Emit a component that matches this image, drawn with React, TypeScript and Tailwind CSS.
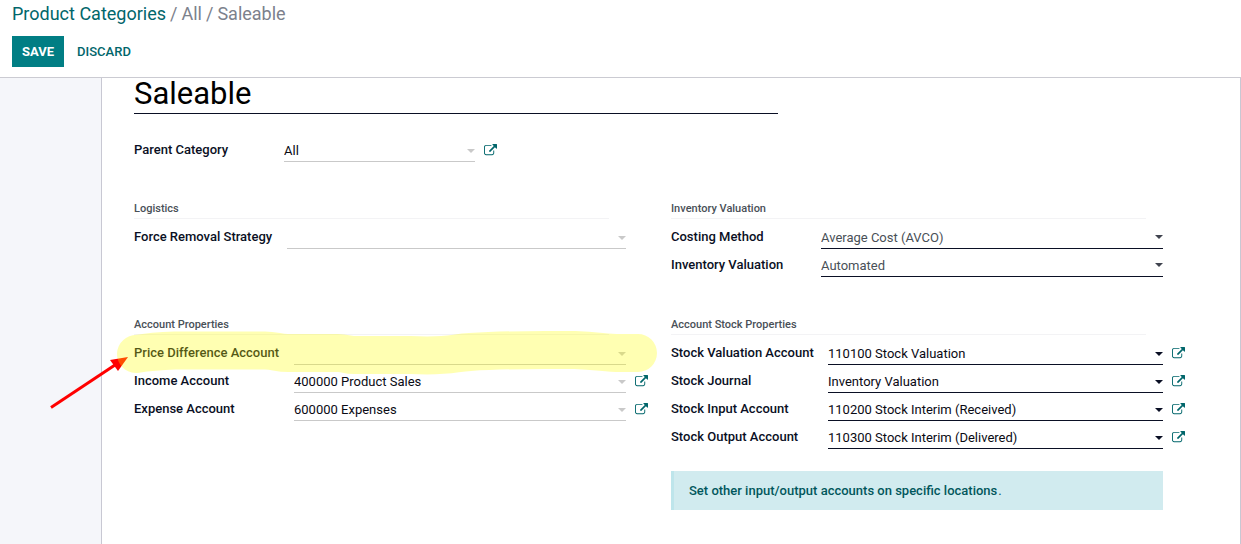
import type { ReactNode } from 'react'

type FieldProps = {
  id: string
  label: string
  value: string
  labelWidth: string
  tone?: 'muted' | 'strong' | 'native'
  link?: boolean
}

const tones = {
  muted: { select: 'border-[#c9c9c9] text-[#0a0a14]', caret: 'top-[15px] text-[#c9c9c9]' },
  strong: { select: 'border-[#0a0f24] text-[#0a0a14]', caret: 'top-[15px] text-[#0a0f24]' },
  native: { select: 'border-[#0a0f24] text-[#495057]', caret: 'top-3.5 text-[#40444f]' },
}

function ExternalLinkIcon() {
  return (
    <svg viewBox="0 0 1792 1792" className="size-[13px]" fill="currentColor" aria-hidden="true">
      <path d="M1408 928v320q0 119-84.5 203.5t-203.5 84.5h-832q-119 0-203.5-84.5t-84.5-203.5v-832q0-119 84.5-203.5t203.5-84.5h704q14 0 23 9t9 23v64q0 14-9 23t-23 9h-704q-66 0-113 47t-47 113v832q0 66 47 113t113 47h832q66 0 113-47t47-113v-320q0-14 9-23t23-9h64q14 0 23 9t9 23zm384-864v512q0 26-19 45t-45 19-45-19l-176-176-652 652q-10 10-23 10t-23-10l-114-114q-10-10-10-23t10-23l652-652-176-176q-19-19-19-45t19-45 45-19h512q26 0 45 19t19 45z" />
    </svg>
  )
}

function Field({ id, label, value, labelWidth, tone = 'muted', link = false }: FieldProps) {
  return (
    <div className="flex h-7">
      <label htmlFor={id} className={`${labelWidth} shrink-0 pt-1.5 text-[13px] leading-5 font-medium text-[#0a0f24]`}>
        {label}
      </label>
      <div className="relative min-w-0 flex-1">
        <select
          id={id}
          defaultValue={value}
          className={`${tones[tone].select} block h-7 w-full appearance-none border-b bg-transparent pt-1.5 pr-4 text-[13px] leading-5 outline-none`}
        >
          <option value={value}>{value}</option>
        </select>
        <svg
          viewBox="0 0 8 4"
          className={`${tones[tone].caret} pointer-events-none absolute right-0 h-1 w-2`}
          fill="currentColor"
          aria-hidden="true"
        >
          <path d="M0 0h8L4 4z" />
        </svg>
      </div>
      <div className="w-[23px] shrink-0 pt-2.5 pl-[9px]">
        {link && (
          <a href="#" className="block text-[#01666b]" aria-label={`Open ${label}`}>
            <ExternalLinkIcon />
          </a>
        )}
      </div>
    </div>
  )
}

function Group({ title, children }: { title: string; children: ReactNode }) {
  return (
    <section className="w-1/2 pr-[22px]">
      <h2 className="mr-10 mb-0.5 h-5 border-b border-[#f3f3f5] text-[11px] leading-5 font-medium text-[#495057]">
        {title}
      </h2>
      {children}
    </section>
  )
}

function Annotation() {
  return (
    <svg className="pointer-events-none absolute top-0 left-0 h-[544px] w-[700px]" viewBox="0 0 700 544" aria-hidden="true">
      <path d="M51 407.500L118 363" stroke="#ff0000" strokeWidth="3" fill="none" />
      <path d="M128 357L110 360L118 371Z" fill="#ff0000" />
      <path
        d="M136 354C148 352 160 351 175 350.500H265C275 350.500 278 353 288 353H338C346 353 346 355 354 355H410C450 357 452 353 470 352C500 350 520 350 545 350H575C600 351 605 353 620 353H638"
        stroke="#ffff00"
        strokeOpacity="0.3"
        strokeWidth="38"
        strokeLinecap="round"
        strokeLinejoin="round"
        fill="none"
      />
    </svg>
  )
}

function App() {
  return (
    <div className="relative flex min-h-screen flex-col bg-white font-[Roboto,sans-serif]">
      <header className="h-[78px] border-b border-[#cbcbd2] px-3">
        <nav className="flex h-7 items-center gap-1 text-[18px] leading-7 text-[#7c818c]">
          <a href="#" className="text-[#01666b]">Product Categories</a>
          <span>/</span>
          <span>All</span>
          <span>/</span>
          <span>Saleable</span>
        </nav>
        <div className="mt-2 flex text-[13px] font-medium">
          <button className="h-[31px] bg-[#017e84] px-2.5 font-bold text-white">SAVE</button>
          <button className="h-[31px] px-[13px] text-[#01666b]">DISCARD</button>
        </div>
      </header>
      <main className="flex flex-1 bg-[#f5f6fa] pl-[101px]">
        <div className="flex-1 border-x border-[#c8c8d3] bg-white px-8">
          <input
            aria-label="Category name"
            defaultValue="Saleable"
            className="block h-9 w-3/5 border-b border-[#0a0f24] pb-1 text-[31px] leading-8 text-black outline-none"
          />
          <div className="mt-5 w-[364px]">
            <Field id="parent" label="Parent Category" value="All" labelWidth="w-[150px]" link />
          </div>
          <div className="mt-[37px] flex">
            <Group title="Logistics">
              <Field id="removal" label="Force Removal Strategy" value="" labelWidth="w-[153px]" />
            </Group>
            <Group title="Inventory Valuation">
              <Field id="costing" label="Costing Method" value="Average Cost (AVCO)" labelWidth="w-[150px]" tone="native" />
              <Field id="valuation" label="Inventory Valuation" value="Automated" labelWidth="w-[150px]" tone="native" />
            </Group>
          </div>
          <div className="mt-[38px] flex">
            <Group title="Account Properties">
              <Field id="difference" label="Price Difference Account" value="" labelWidth="w-[160px]" />
              <Field id="income" label="Income Account" value="400000 Product Sales" labelWidth="w-[160px]" link />
              <Field id="expense" label="Expense Account" value="600000 Expenses" labelWidth="w-[160px]" link />
            </Group>
            <Group title="Account Stock Properties">
              <Field id="stock-valuation" label="Stock Valuation Account" value="110100 Stock Valuation" labelWidth="w-[157px]" tone="strong" link />
              <Field id="journal" label="Stock Journal" value="Inventory Valuation" labelWidth="w-[157px]" tone="strong" link />
              <Field id="input" label="Stock Input Account" value="110200 Stock Interim (Received)" labelWidth="w-[157px]" tone="strong" link />
              <Field id="output" label="Stock Output Account" value="110300 Stock Interim (Delivered)" labelWidth="w-[157px]" tone="strong" link />
              <div className="mt-[22px] mr-[23px] flex h-[39px] items-center gap-px border-l-3 border-[#bee5eb] bg-[#d1ebef] pl-[15px] text-[13px] text-[#0c5460]">
                <a href="#" className="font-medium text-[#01575c]">Set other input/output accounts on specific locations</a>
                <span>.</span>
              </div>
            </Group>
          </div>
        </div>
      </main>
      <Annotation />
    </div>
  )
}

export default App
